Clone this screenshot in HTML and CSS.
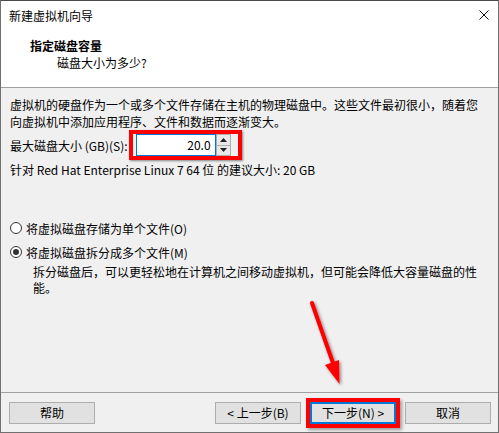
FILE: index.html
```html
<!DOCTYPE html>
<html lang="zh-CN">
<head>
<meta charset="utf-8">
<title>新建虚拟机向导</title>
<link rel="stylesheet" href="styles.css">
</head>
<body>
<div class="window">
  <div class="header">
    <div class="titlebar">
      <span class="title">新建虚拟机向导</span>
      <svg class="close" width="10" height="10" viewBox="0 0 10 10"><path d="M0.5 0.5 L9.5 9.5 M9.5 0.5 L0.5 9.5" stroke="#111" stroke-width="1" fill="none"/></svg>
    </div>
    <div class="h-title">指定磁盘容量</div>
    <div class="h-sub">磁盘大小为多少?</div>
  </div>
  <div class="content">
    <p class="para">虚拟机的硬盘作为一个或多个文件存储在主机的物理磁盘中。这些文件最初很小，随着您<br>向虚拟机中添加应用程序、文件和数据而逐渐变大。</p>
    <div class="size-row">
      <span class="label">最大磁盘大小 (GB)(S):</span>
      <span class="annot">
        <span class="edit">20.0</span>
        <span class="spin">
          <span class="spin-btn"><svg width="7" height="4" viewBox="0 0 7 4"><path d="M3.5 0 L7 4 L0 4 Z" fill="#222"/></svg></span>
          <span class="spin-btn"><svg width="7" height="4" viewBox="0 0 7 4"><path d="M0 0 L7 0 L3.5 4 Z" fill="#222"/></svg></span>
        </span>
      </span>
    </div>
    <div class="rec">针对 Red Hat Enterprise Linux 7 64 位 的建议大小: 20 GB</div>
    <div class="radio-row first"><span class="radio"></span><span>将虚拟磁盘存储为单个文件(O)</span></div>
    <div class="radio-row"><span class="radio checked"></span><span>将虚拟磁盘拆分成多个文件(M)</span></div>
    <p class="desc">拆分磁盘后，可以更轻松地在计算机之间移动虚拟机，但可能会降低大容量磁盘的性<br>能。</p>
  </div>
  <div class="footer">
    <button class="btn">帮助</button>
    <div class="nav">
      <button class="btn">&lt; 上一步(B)</button>
      <button class="btn primary">下一步(N) &gt;</button>
      <button class="btn">取消</button>
    </div>
  </div>
  <svg class="arrow" width="499" height="433" viewBox="0 0 499 433">
    <defs>
      <filter id="sh" x="-50%" y="-50%" width="200%" height="200%">
        <feDropShadow dx="1.5" dy="1.5" stdDeviation="1.5" flood-color="#000" flood-opacity="0.45"/>
      </filter>
    </defs>
    <g filter="url(#sh)">
      <path d="M312 303 L333 363" stroke="#ff0000" stroke-width="4" stroke-linecap="round" fill="none"/>
      <path d="M339.5 384 L325 365 L339 360 Z" fill="#ff0000"/>
    </g>
  </svg>
</div>
</body>
</html>
```
FILE: styles.css
```css
* { box-sizing: border-box; }
html, body { margin: 0; padding: 0; background: #f0f0f0; }
body {
  font-family: "Noto Sans CJK SC", "Microsoft YaHei", sans-serif;
  font-size: 12px;
  color: #000;
}
.window {
  position: relative;
  width: 499px;
  height: 433px;
  border: 1px solid #707070;
  border-top-color: #4a4a4a;
  background: #f0f0f0;
  display: flex;
  flex-direction: column;
}
.header {
  background: #fff;
  height: 87px;
  border-bottom: 1px solid #a0a0a0;
  flex: none;
}
.titlebar {
  height: 28px;
  display: flex;
  align-items: center;
  justify-content: space-between;
  padding: 0 9px 0 8px;
}
.title { line-height: 17px; color: #000; }
.close { display: block; }
.h-title {
  margin-top: 8px;
  padding-left: 29px;
  font-weight: bold;
  line-height: 17px;
}
.h-sub {
  padding-left: 56px;
  line-height: 17px;
}
.content {
  flex: 1;
  padding: 8px 9px 0 9px;
}
.para { margin: 0; line-height: 17px; white-space: nowrap; }
.size-row {
  display: flex;
  align-items: center;
  height: 30px;
}
.label { margin-right: 1px; line-height: 17px; }
.annot {
  display: flex;
  align-items: center;
  width: 113px;
  height: 30px;
  border: 4px solid #ff0000;
  padding-left: 3px;
  box-shadow: 1px 1px 2px rgba(0,0,0,0.45);
}
.edit {
  width: 80px;
  height: 22px;
  background: #fff;
  border: 1px solid #0078d7;
  text-align: right;
  padding-right: 4px;
  line-height: 20px;
}
.spin {
  display: flex;
  flex-direction: column;
  width: 15px;
  height: 22px;
}
.spin-btn {
  flex: 1;
  display: flex;
  align-items: center;
  justify-content: center;
  background: #e8e8e8;
  border: 1px solid #adadad;
}
.spin-btn + .spin-btn { border-top: none; }
.spin-btn svg { display: block; }
.rec { margin-top: 1px; line-height: 17px; }
.radio-row {
  display: flex;
  align-items: center;
  height: 24px;
  gap: 4px;
}
.radio-row.first { margin-top: 38px; }
.radio {
  width: 12px;
  height: 12px;
  border: 1px solid #333;
  border-radius: 50%;
  background: #fff;
  display: flex;
  align-items: center;
  justify-content: center;
  flex: none;
}
.radio.checked::after {
  content: "";
  width: 6px;
  height: 6px;
  border-radius: 50%;
  background: #333;
}
.desc {
  margin: 0;
  padding-left: 23px;
  line-height: 16px;
  white-space: nowrap;
}
.footer {
  flex: none;
  height: 40px;
  border-top: 1px solid #a0a0a0;
  display: flex;
  align-items: flex-start;
  padding: 9px 7px 0 8px;
}
.nav {
  margin-left: auto;
  display: flex;
  gap: 9px;
}
.btn {
  width: 86px;
  height: 22px;
  background: #e1e1e1;
  border: 1px solid #adadad;
  font-family: inherit;
  font-size: 12px;
  color: #000;
  padding: 0;
  line-height: 20px;
  margin: 0;
}
.btn.primary {
  border-color: #0078d7;
  box-shadow: inset 0 0 0 1px #0078d7, 0 0 0 4px #ff0000, 2px 2px 3px 4px rgba(0,0,0,0.35);
}
.arrow {
  position: absolute;
  left: -1px;
  top: -1px;
  pointer-events: none;
}
```
